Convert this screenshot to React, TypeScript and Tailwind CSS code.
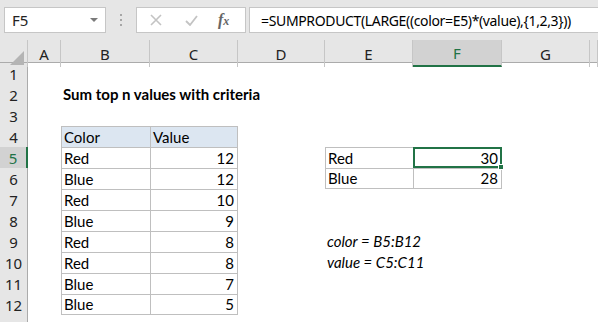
import React from "react";

const COLS = "grid grid-cols-[28px_33px_89px_88px_87px_88px_89px_88px_1fr]";
const cellFont = "font-['Lato','Liberation_Sans',sans-serif] text-[15px] text-black";
const uiFont = "font-['Noto_Sans','Open_Sans',sans-serif]";

type Cell = {
  text?: string;
  align?: "left" | "right";
  bold?: boolean;
  italic?: boolean;
  box?: string;
};

const data: Record<number, Record<number, Cell>> = {};
const put = (r: number, c: number, cell: Cell) => {
  data[r] = data[r] || {};
  data[r][c] = cell;
};

put(2, 1, { text: "Sum top n values with criteria", bold: true });

const rows: [string, number][] = [
  ["Red", 12],
  ["Blue", 12],
  ["Red", 10],
  ["Blue", 9],
  ["Red", 8],
  ["Red", 8],
  ["Blue", 7],
  ["Blue", 5],
];
put(4, 1, { text: "Color", box: "border-l border-t bg-[#dce6f1]" });
put(4, 2, { text: "Value", box: "border-l border-t border-r bg-[#dce6f1]" });
rows.forEach(([c, v], i) => {
  const last = i === rows.length - 1 ? " border-b" : "";
  put(5 + i, 1, { text: c, box: "border-l border-t" + last });
  put(5 + i, 2, { text: String(v), align: "right", box: "border-l border-t border-r" + last });
});

put(5, 4, { text: "Red", box: "border-l border-t" });
put(5, 5, { text: "30", align: "right", box: "border-l border-t border-r" });
put(6, 4, { text: "Blue", box: "border-l border-t border-b" });
put(6, 5, { text: "28", align: "right", box: "border-l border-t border-r border-b" });

put(9, 4, { text: "color = B5:B12", italic: true });
put(10, 4, { text: "value = C5:C11", italic: true });

const letters = ["A", "B", "C", "D", "E", "F", "G", ""];

function Toolbar() {
  return (
    <div className={`flex h-[40px] items-start pt-[7px] ${uiFont}`}>
      <div className="ml-[4px] flex h-[26px] w-[102px] shrink-0 items-center justify-between border border-[#c6c6c6] bg-white pl-[7px] pr-[7px] text-[15px] text-[#222]">
        <span>F5</span>
        <svg width="8" height="5" viewBox="0 0 8 5">
          <path d="M0 0 H8 L4 4 Z" fill="#7a7a7a" />
        </svg>
      </div>
      <div className="flex h-[26px] w-[30px] shrink-0 flex-col items-center justify-center gap-[3px]">
        <span className="h-[2px] w-[2px] bg-[#a6a6a6]" />
        <span className="h-[2px] w-[2px] bg-[#a6a6a6]" />
        <span className="h-[2px] w-[2px] bg-[#a6a6a6]" />
      </div>
      <div className="flex h-[26px] w-[110px] shrink-0 items-center border border-[#c6c6c6] bg-white">
        <svg className="ml-[13px]" width="12" height="12" viewBox="0 0 12 12">
          <path d="M1 1 L11 11 M11 1 L1 11" stroke="#c3c3c3" strokeWidth="1.6" />
        </svg>
        <svg className="ml-[23px]" width="13" height="11" viewBox="0 0 13 11">
          <path d="M1 6 L5 10 L12 1" stroke="#c3c3c3" strokeWidth="1.8" fill="none" />
        </svg>
        <span className="ml-[20px] font-['Liberation_Serif',serif] text-[16px] font-bold italic text-[#666]">
          f<span className="text-[12px]">x</span>
        </span>
      </div>
      <div className="ml-[3px] flex h-[26px] min-w-0 flex-1 items-center overflow-hidden border border-r-0 border-[#c6c6c6] bg-white pl-[11px] text-[14px] tracking-[-0.35px] text-black whitespace-nowrap">
        =SUMPRODUCT(LARGE((color=E5)*(value),{"{"}1,2,3{"}"}))
      </div>
    </div>
  );
}

function HeaderRow() {
  return (
    <div className={`${COLS} h-[23px] border-b border-[#ababab]`}>
      <div className="relative border-r border-[#c6c6c6]">
        <svg className="absolute bottom-[2px] right-[3px]" width="14" height="14" viewBox="0 0 14 14">
          <path d="M14 0 V14 H0 Z" fill="#b4b4b4" />
        </svg>
      </div>
      {letters.map((l, i) =>
        l === "F" ? (
          <div
            key={i}
            className={`flex items-center justify-center border-r border-b-2 border-r-[#c6c6c6] border-b-[#217346] bg-[#d2d2d2] pt-[2px] text-[15px] text-[#217346] ${uiFont}`}
          >
            {l}
          </div>
        ) : (
          <div
            key={i}
            className={`flex items-center justify-center border-r border-[#c6c6c6] pt-[2px] text-[15px] text-[#222] ${uiFont}`}
          >
            {l}
          </div>
        )
      )}
    </div>
  );
}

function SheetRow({ r }: { r: number }) {
  const row = data[r] || {};
  const active = r === 5;
  return (
    <div className={`${COLS} h-[21px]`}>
      <div
        className={
          active
            ? `flex items-center justify-center border-b border-r-2 border-b-[#c6c6c6] border-r-[#217346] bg-[#d2d2d2] text-[15px] text-[#217346] ${uiFont}`
            : `flex items-center justify-center border-b border-r border-b-[#d4d4d4] border-r-[#ababab] bg-[#e6e6e6] text-[15px] text-[#222] ${uiFont}`
        }
      >
        {r <= 12 ? r : ""}
      </div>
      {letters.map((_, c) => {
        const cell = row[c];
        const sel = r === 5 && c === 5;
        return (
          <div
            key={c}
            className={`relative flex h-[21px] min-w-0 items-center overflow-visible border-[#bfbfbf] ${cell?.box ?? ""} ${
              cell?.align === "right" ? "justify-end pr-[3px]" : "pl-[2px]"
            } ${cellFont} ${cell?.bold ? "font-bold" : ""} ${cell?.italic ? "italic" : ""}`}
          >
            <span className="relative z-10 whitespace-nowrap">{cell?.text}</span>
            {sel && (
              <div className="absolute -left-px -top-px bottom-0 -right-px z-20 border-2 border-[#217346]">
                <span className="absolute -bottom-[4px] -right-[4px] h-[6px] w-[6px] border border-white bg-[#217346]" />
              </div>
            )}
          </div>
        );
      })}
    </div>
  );
}

export default function App() {
  return (
    <div className="h-[322px] w-[598px] overflow-hidden bg-[#e6e6e6]">
      <Toolbar />
      <HeaderRow />
      <div className="bg-white">
        {Array.from({ length: 13 }, (_, i) => (
          <SheetRow key={i} r={i + 1} />
        ))}
      </div>
    </div>
  );
}
